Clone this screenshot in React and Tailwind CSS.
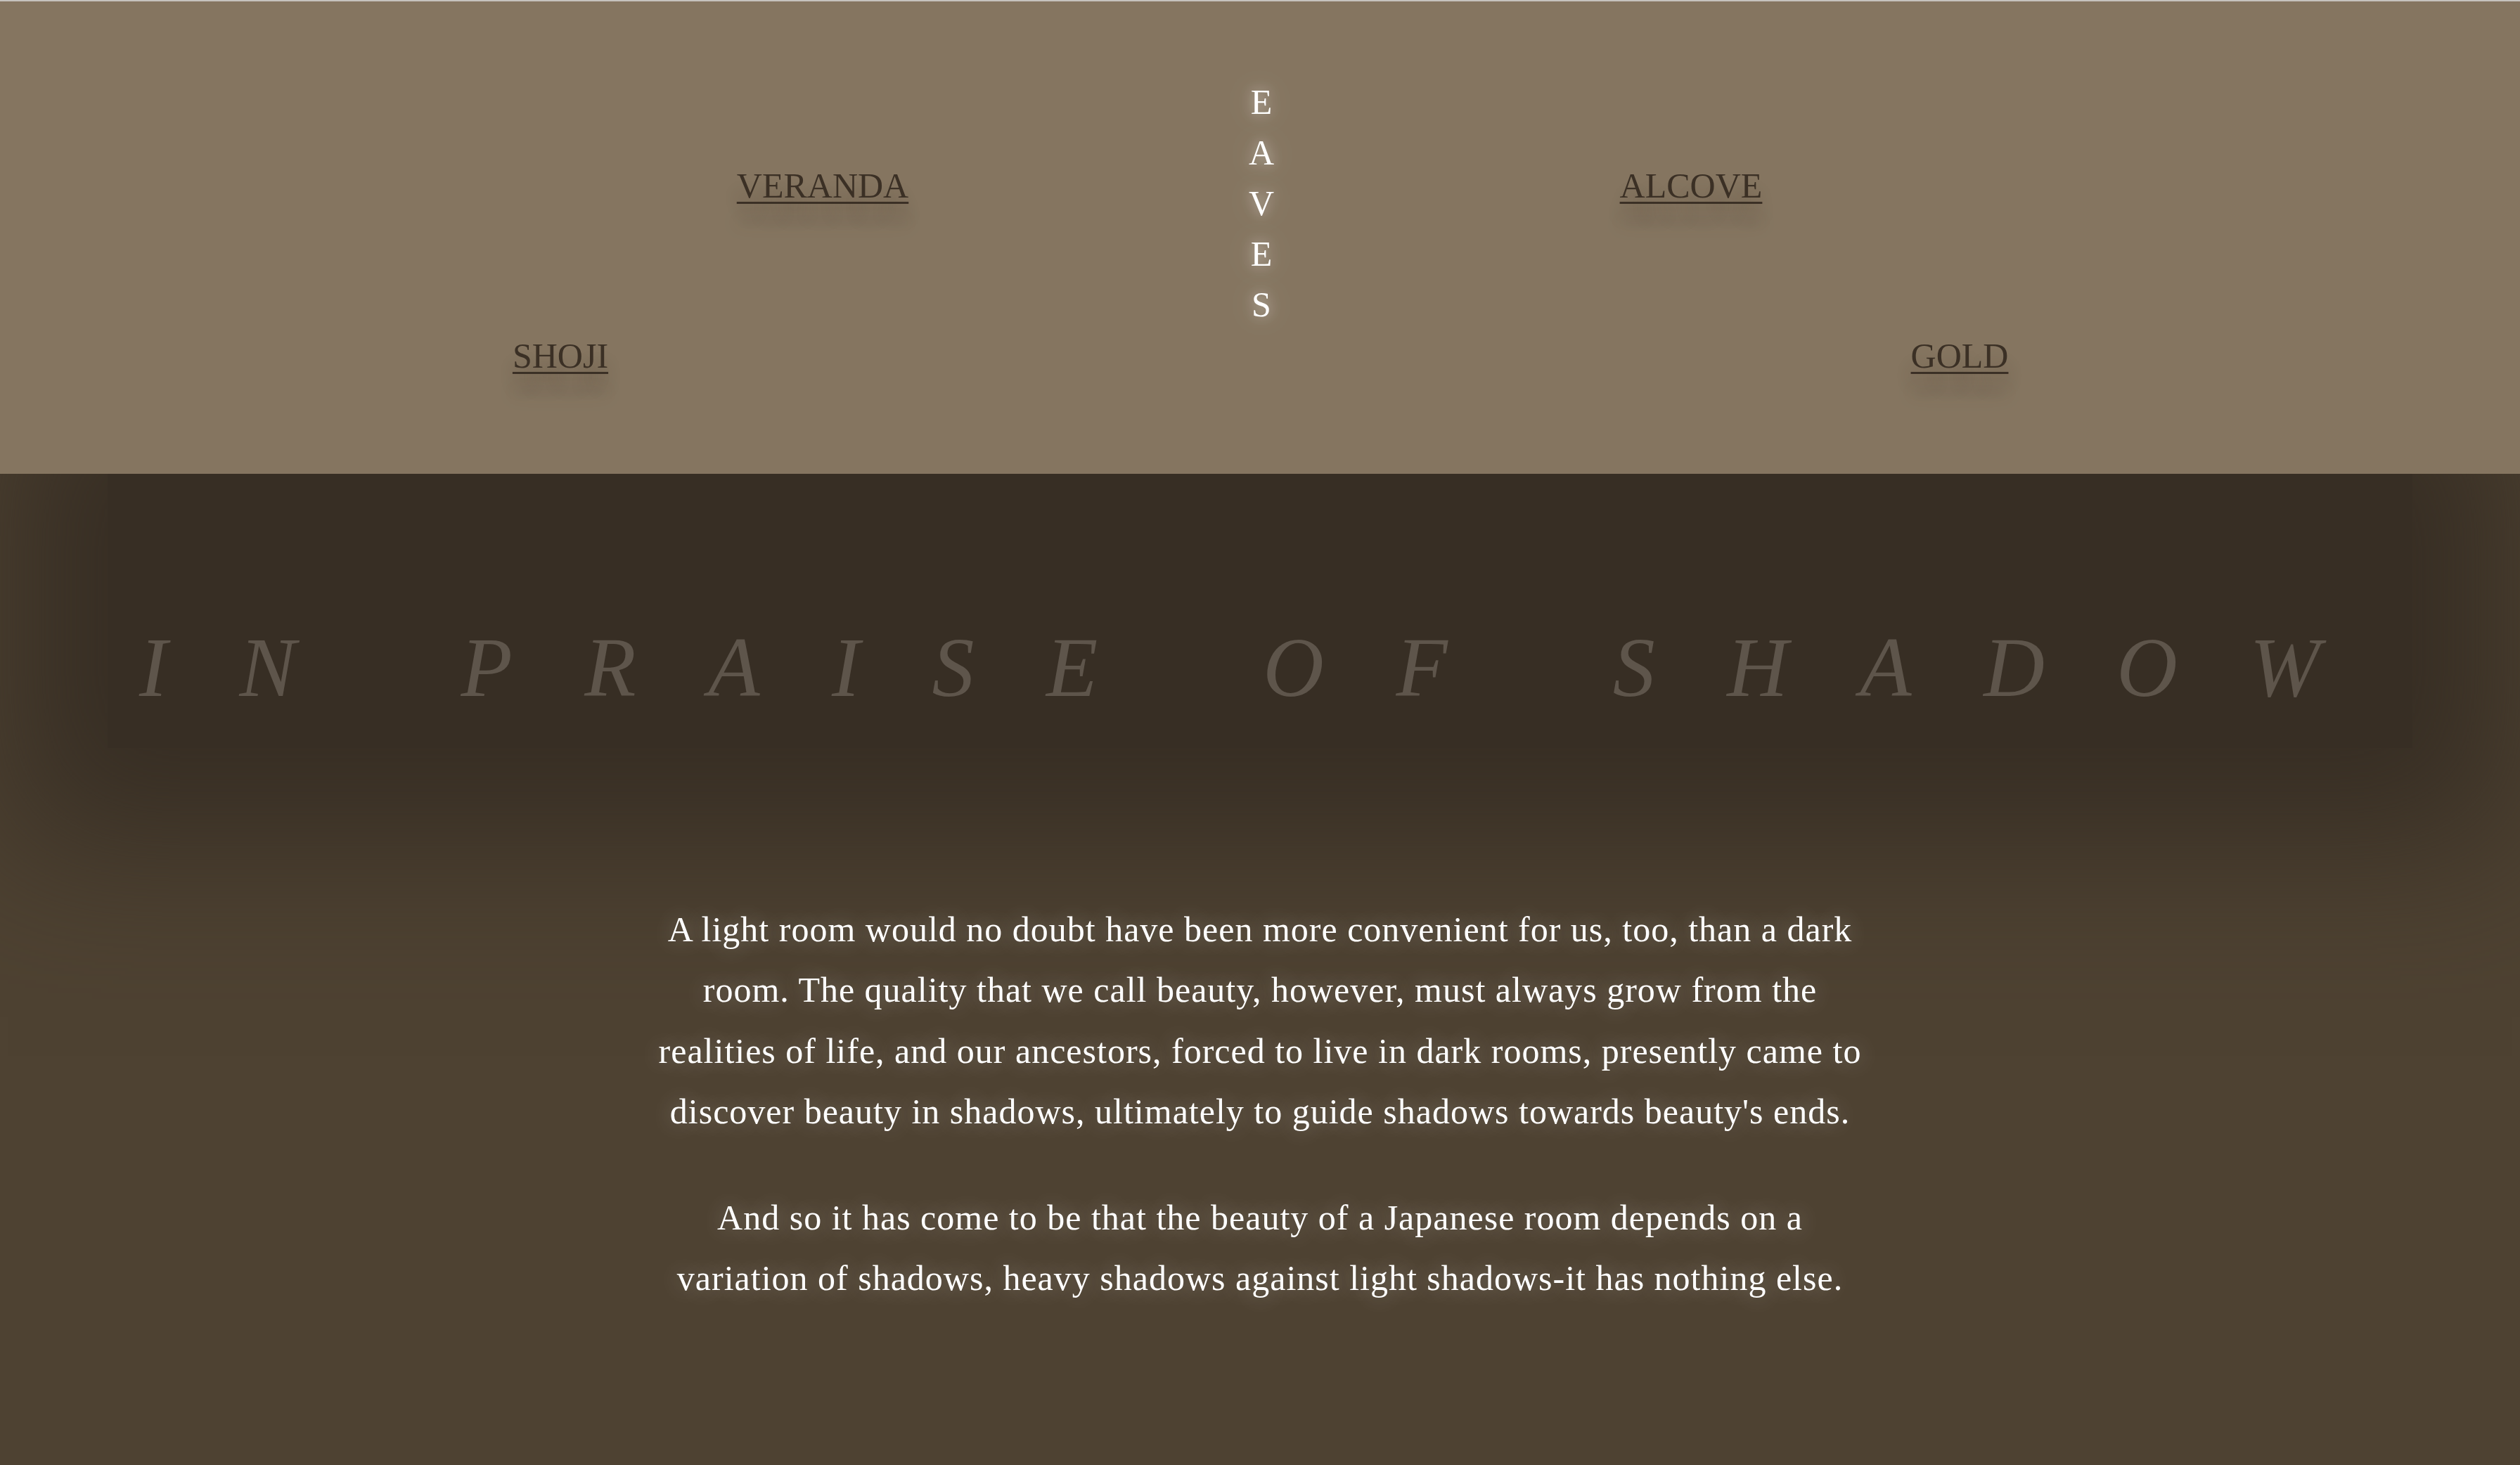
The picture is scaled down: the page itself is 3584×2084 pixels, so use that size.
import React from "react";

const serif = { fontFamily: '"Liberation Serif", "Times New Roman", serif' };

const NavLink = ({ children, className }) => (
  <a
    href="#"
    className={`block w-[300px] text-center text-[50px] leading-[75px] text-[#3b3025] underline decoration-[3px] underline-offset-[6px] [text-shadow:0_28px_22px_rgba(45,35,25,0.3)] ${className}`}
  >
    {children}
  </a>
);

const Eaves = () => (
  <div className="flex w-[300px] flex-col items-center mt-[107px] ml-[324px] mr-[311px] text-[50px] leading-[72px] text-white [text-shadow:0_0_18px_rgba(255,255,255,0.55),0_0_50px_rgba(255,255,255,0.4)]">
    {"EAVES".split("").map((ch, i) => (
      <span key={i}>{ch}</span>
    ))}
  </div>
);

export default function App() {
  return (
    <div className="min-h-screen overflow-hidden bg-[#4e4232]" style={serif}>
      <nav className="relative z-10 h-[674px] border-t-2 border-[#c6c2bd] bg-[#857560]">
        <div className="flex items-start justify-center">
          <NavLink className="mt-[467px]">SHOJI</NavLink>
          <NavLink className="mt-[225px] ml-[73px]">VERANDA</NavLink>
          <Eaves />
          <NavLink className="mt-[225px]">ALCOVE</NavLink>
          <NavLink className="mt-[467px] ml-[82px]">GOLD</NavLink>
        </div>
      </nav>

      <header className="mx-[153px] h-[390px] bg-[#372e24] pt-[216px] shadow-[0_0_200px_140px_#372e24]">
        <h1 className="pl-[16px] text-center text-[120px] leading-none italic tracking-[102.5px] text-[#5e554b] whitespace-nowrap">
          IN PRAISE OF SHADOW
        </h1>
      </header>

      <main className="relative mt-[215px] pb-[200px] flex flex-col items-center text-center text-[50px] leading-[86.4px] tracking-[1px] text-white [text-shadow:0_0_30px_rgba(255,255,255,0.35)]">
        <p className="mb-16 whitespace-nowrap">
          A light room would no doubt have been more convenient for us, too, than a dark
          <br />
          room. The quality that we call beauty, however, must always grow from the
          <br />
          realities of life, and our ancestors, forced to live in dark rooms, presently came to
          <br />
          discover beauty in shadows, ultimately to guide shadows towards beauty's ends.
        </p>
        <p className="whitespace-nowrap">
          And so it has come to be that the beauty of a Japanese room depends on a
          <br />
          variation of shadows, heavy shadows against light shadows-it has nothing else.
        </p>
      </main>
    </div>
  );
}
